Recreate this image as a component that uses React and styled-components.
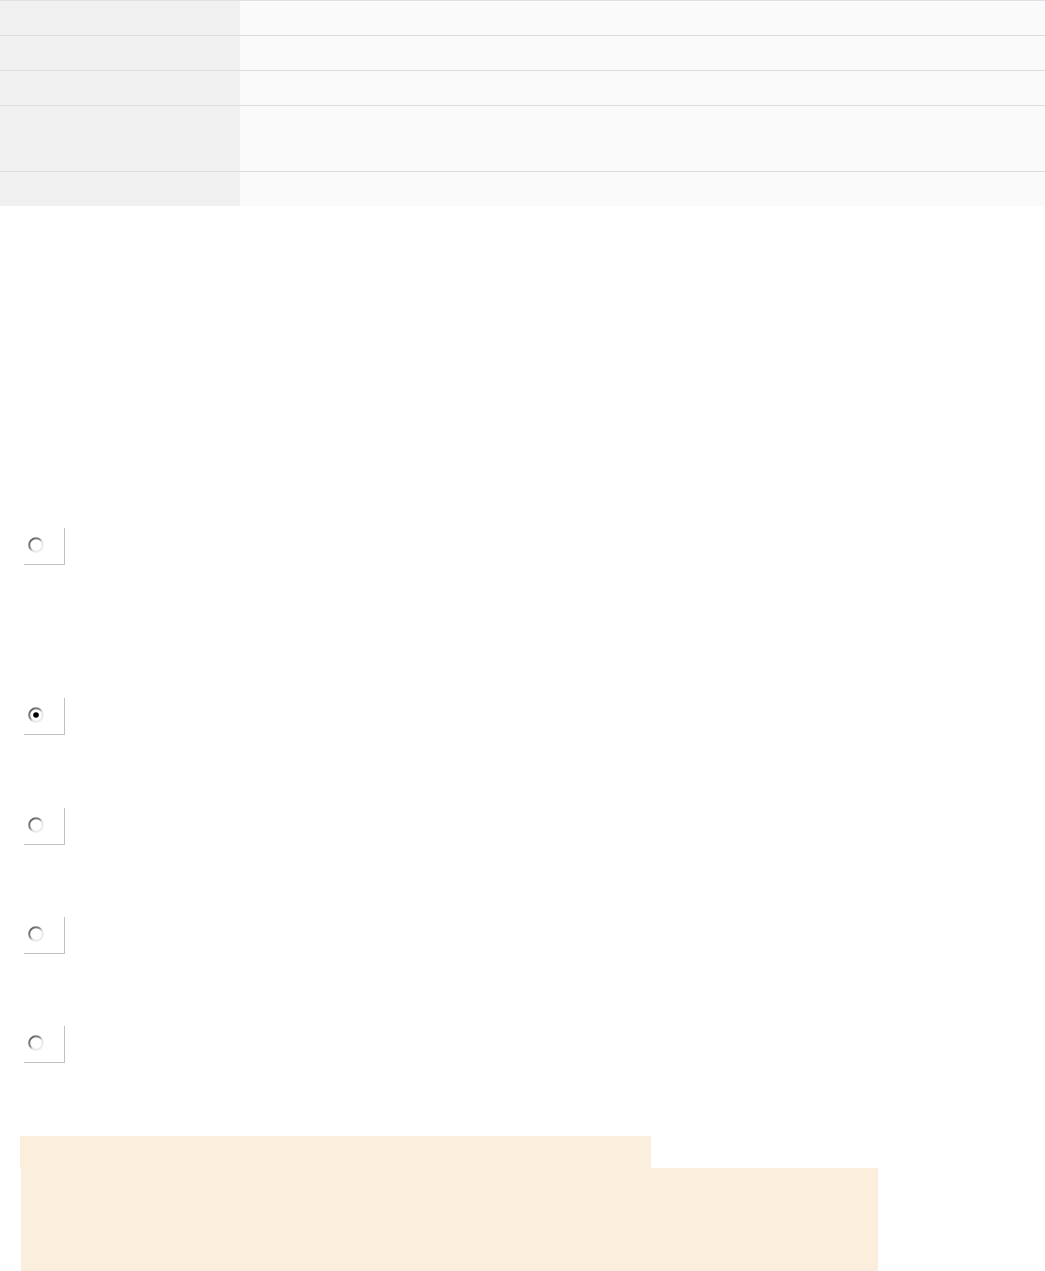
import React from 'react';
import styled, { createGlobalStyle } from 'styled-components';

const GlobalStyle = createGlobalStyle`
  body {
    margin: 0;
    background: #ffffff;
    font-family: "Liberation Sans", Arial, sans-serif;
  }
`;

const Table = styled.div`
  width: 100%;
  border-top: 1px solid #dfe0e6;
`;

const Row = styled.div`
  display: grid;
  grid-template-columns: 240px 1fr;
  height: ${(p) => p.h}px;
  box-sizing: border-box;
  border-top: ${(p) => (p.first ? 'none' : '1px solid #dedede')};
`;

const Label = styled.div`
  background: #f0f0f0;
`;

const Value = styled.div`
  background: #fafafa;
`;

const Options = styled.div`
  display: flex;
  flex-direction: column;
  padding-left: 24px;
`;

const Option = styled.label`
  display: block;
  width: 41px;
  height: 37px;
  box-sizing: border-box;
  margin-top: ${(p) => p.gap}px;
  padding: 8px 0 0 3px;
  border-right: 1px solid #c0c0c0;
  border-bottom: 1px solid #c0c0c0;
`;

const Note = styled.div`
  margin-top: 73px;
  display: flex;
  flex-direction: column;
`;

const NoteHead = styled.div`
  margin-left: 20px;
  width: 631px;
  height: 32px;
  background: #fbeedc;
`;

const NoteBody = styled.div`
  margin-left: 21px;
  width: 857px;
  height: 140px;
  background: #fbeedc;
`;

function Radio({ checked }) {
  return (
    <svg width="18" height="18" viewBox="0 0 18 18">
      <defs>
        <linearGradient id="rg" x1="0" y1="0" x2="1" y2="1">
          <stop offset="0" stopColor="#555" />
          <stop offset="0.4" stopColor="#8a8a8a" />
          <stop offset="0.6" stopColor="#e4e4e4" />
          <stop offset="1" stopColor="#f2f2f2" />
        </linearGradient>
      </defs>
      <circle cx="9" cy="9" r="6.8" fill="#fff" stroke="url(#rg)" strokeWidth="2" />
      {checked && <circle cx="9" cy="9" r="2.8" fill="#000" />}
    </svg>
  );
}

const rows = [35, 35, 35, 66, 35];
const options = [
  { gap: 322, checked: false },
  { gap: 133, checked: true },
  { gap: 73, checked: false },
  { gap: 72, checked: false },
  { gap: 72, checked: false },
];

export default function App() {
  return (
    <>
      <GlobalStyle />
      <Table>
        {rows.map((h, i) => (
          <Row key={i} h={i === 0 ? h - 1 : h} first={i === 0}>
            <Label />
            <Value />
          </Row>
        ))}
      </Table>
      <Options>
        {options.map((o, i) => (
          <Option key={i} gap={o.gap}>
            <Radio checked={o.checked} />
          </Option>
        ))}
      </Options>
      <Note>
        <NoteHead />
        <NoteBody />
      </Note>
    </>
  );
}
